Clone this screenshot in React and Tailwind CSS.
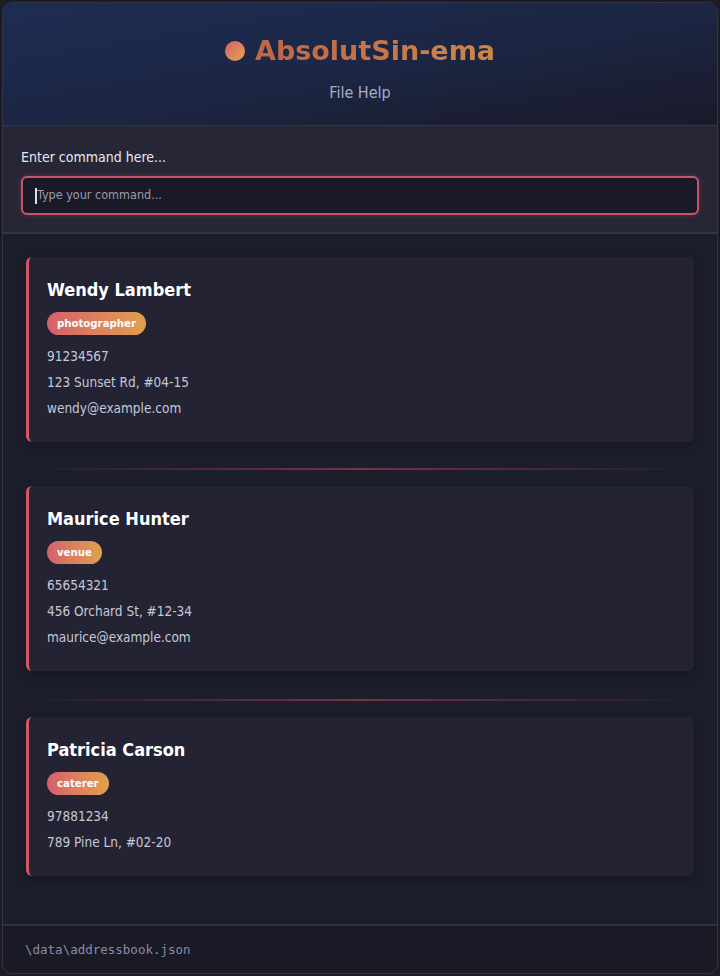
import React from "react";

const people = [
  { name: "Wendy Lambert", tag: "photographer", phone: "91234567", addr: "123 Sunset Rd, #04-15", email: "wendy@example.com" },
  { name: "Maurice Hunter", tag: "venue", phone: "65654321", addr: "456 Orchard St, #12-34", email: "maurice@example.com" },
  { name: "Patricia Carson", tag: "caterer", phone: "97881234", addr: "789 Pine Ln, #02-20" },
];

function Card({ p }) {
  return (
    <div className="rounded-md border-l-[3px] border-[#d25a68] bg-[#232334] pl-[18px] pr-5 pt-5 pb-[19px] shadow-[0_4px_12px_rgba(0,0,0,0.25)]">
      <div className="text-[18px] leading-[26px] font-bold text-white">{p.name}</div>
      <div className="mt-[9px] flex">
        <span className="rounded-full bg-gradient-to-r from-[#d4606a] to-[#e0a04c] px-[10px] h-[23px] leading-[23px] text-[11.3px] font-bold text-white">
          {p.tag}
        </span>
      </div>
      <div className="mt-[10px] text-[13.5px] text-[#c6c8d6]">
        <div className="h-[26px] leading-[22px]">{p.phone}</div>
        <div className="h-[26px] leading-[22px]">{p.addr}</div>
        {p.email && <div className="h-[26px] leading-[22px]">{p.email}</div>}
      </div>
    </div>
  );
}

function Sep({ top }) {
  return <div className={`${top} mb-[16px] h-[2px] bg-gradient-to-r from-transparent via-[#7a3246] to-transparent`} />;
}

export default function App() {
  return (
    <div className="min-h-[976px] w-[720px] bg-[#1b1c24] p-[2px]" style={{ fontFamily: '"DejaVu Sans Condensed", "DejaVu Sans", sans-serif' }}>
      <div className="flex h-[972px] flex-col overflow-hidden rounded-[10px] border border-[#33344a] bg-[#1d1e2b]">
        <header className="flex h-[123px] flex-col items-center border-b border-[#2e3654] bg-gradient-to-br from-[#1d2d52] via-[#1c2644] to-[#1a1a2a]">
          <div className="mt-[31px] flex items-center gap-[10px]">
            <span className="h-[20px] w-[20px] rounded-full bg-gradient-to-br from-[#d4606a] to-[#e4a44c]" />
            <span
              className="bg-gradient-to-r from-[#bd6549] to-[#cc8748] bg-clip-text text-[27px] leading-[34px] font-bold text-transparent"
              style={{ fontFamily: '"DejaVu Sans", sans-serif' }}
            >
              AbsolutSin-ema
            </span>
          </div>
          <div className="mt-[15px] text-[16px] leading-5 text-[#a6accb]">File Help</div>
        </header>
        <section className="border-b-2 border-[#33344a] bg-[#262636] px-[18px] pt-[21px] pb-[17px]">
          <div className="text-[14px] leading-5 text-[#e8e8ee]">Enter command here...</div>
          <div className="mt-[9px] flex h-[39px] items-center rounded-md border-2 border-[#c85466] bg-[#191928] px-[12px] shadow-[0_0_6px_rgba(200,84,102,0.3)]">
            <span className="h-[16px] w-[2px] bg-[#e0e0e0]" />
            <span className="text-[12.5px] text-[#9c9ca8]">Type your command...</span>
          </div>
        </section>
        <main className="flex-1 px-[23px] pt-[23px]">
          <Card p={people[0]} />
          <Sep top="mt-[26px]" />
          <Card p={people[1]} />
          <Sep top="mt-[28px]" />
          <Card p={people[2]} />
        </main>
        <footer className="h-[49px] border-t-2 border-[#2e2f40] bg-[#1a1a26] px-[22px] pt-[15px] text-[12.5px] text-[#8a8aa8]" style={{ fontFamily: '"DejaVu Sans Mono", monospace' }}>
          \data\addressbook.json
        </footer>
      </div>
    </div>
  );
}
